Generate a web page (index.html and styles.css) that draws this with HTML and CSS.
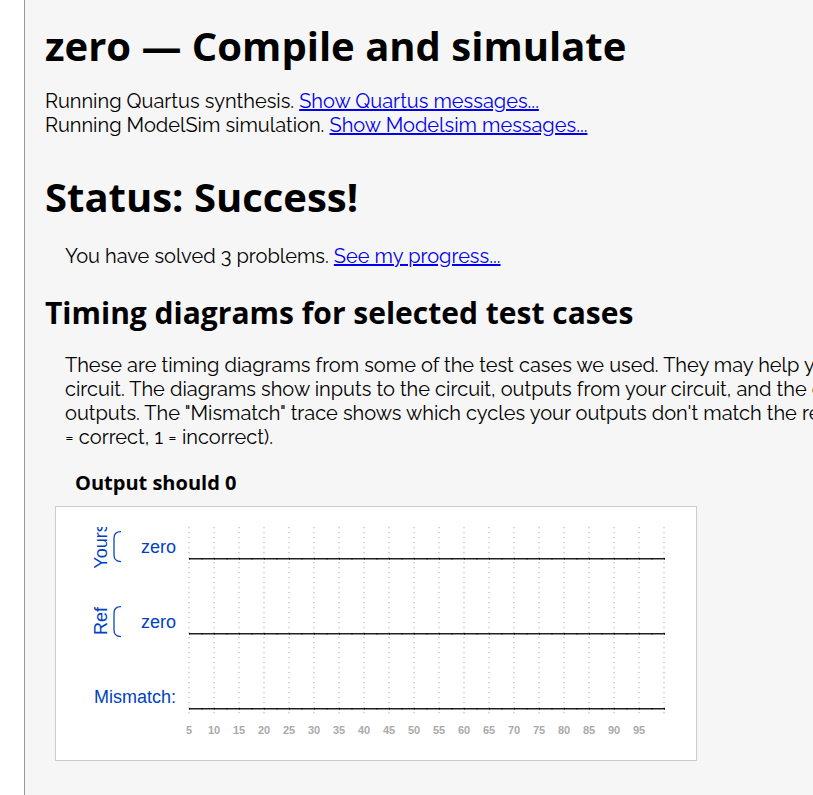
FILE: index.html
```html
<!DOCTYPE html>
<html lang="en">
<head>
<meta charset="utf-8">
<title>zero — Compile and simulate</title>
<link rel="stylesheet" href="styles.css">
</head>
<body>
<main class="content">
  <h1>zero — Compile and simulate</h1>
  <p class="log">Running Quartus synthesis. <a href="#quartus">Show Quartus messages...</a><br>
  Running ModelSim simulation. <a href="#modelsim">Show Modelsim messages...</a></p>

  <h1 class="status">Status: Success!</h1>
  <p class="note">You have solved 3 problems. <a href="#progress">See my progress...</a></p>

  <h2>Timing diagrams for selected test cases</h2>
  <p class="note">These are timing diagrams from some of the test cases we used. They may help you debug your<br>
  circuit. The diagrams show inputs to the circuit, outputs from your circuit, and the expected<br>
  outputs. The "Mismatch" trace shows which cycles your outputs don't match the reference outputs (0<br>
  = correct, 1 = incorrect).</p>

  <h3>Output should 0</h3>
  <figure class="diagram">
    <svg id="wave" width="600" height="213" viewBox="0 0 600 213" role="img" aria-label="Timing diagram">
      <g class="label">
        <text x="100" y="26" text-anchor="end">zero</text>
        <text x="100" y="101" text-anchor="end">zero</text>
        <text x="100" y="176" text-anchor="end">Mismatch:</text>
        <text transform="translate(31 19) rotate(-90)" text-anchor="middle">Yours</text>
        <text transform="translate(31 94) rotate(-90)" text-anchor="middle">Ref</text>
      </g>
      <path class="brace" d="M45 4.500 Q38 4.500 38 11 V28 Q38 34.500 45 34.500 M45 79.500 Q38 79.500 38 86 V103 Q38 109.500 45 109.500"/>
      <g id="grid"></g>
      <path class="trace" d="M113 31.800H589M113 106.800H589M113 181.800H589"/>
      <path class="tick" d="M113 31.800H589M113 106.800H589M113 181.800H589"/>
    </svg>
  </figure>
</main>
<script src="wave.js"></script>
</body>
</html>
```
FILE: styles.css
```css
body {
  margin: 0;
  background: #fff;
  color: #000;
  font: 20px/24px Raleway, Lato, sans-serif;
  overflow: hidden;
}

.content {
  box-sizing: border-box;
  min-height: 100vh;
  margin-left: 24px;
  padding: 19px 20px;
  border-left: 1px solid #999;
  background: #f6f6f6;
  white-space: nowrap;
  overflow: hidden;
}

h1, h2, h3 {
  margin: 0;
  font-family: "Open Sans", sans-serif;
  font-weight: 700;
}

h1 {
  font-size: 40px;
  line-height: 54px;
}

h2 {
  margin-top: 24px;
  font-size: 30px;
  line-height: 42px;
}

h3 {
  margin: 20px 0 0 30px;
  font-size: 20px;
  line-height: 28px;
}

p {
  margin: 0;
}

.log {
  margin-top: 16px;
}

.status {
  margin-top: 33px;
}

.note {
  margin: 19px 0 0 20px;
}

.status + .note {
  margin-top: 20px;
}

a {
  color: #00e;
}

.diagram {
  box-sizing: border-box;
  width: fit-content;
  margin: 9px 0 0 10px;
  padding: 20px;
  border: 1px solid #ccc;
  background: #fff;
}

.diagram svg {
  display: block;
}

.label text {
  fill: #0041c4;
  font: 18px "Liberation Sans", sans-serif;
}

.brace {
  fill: none;
  stroke: #0041c4;
  stroke-width: 1.25;
}

.grid-line {
  stroke: #888;
  stroke-width: 0.7;
  stroke-dasharray: 1.25 3.75;
}

.time {
  fill: #aaa;
  font: bold 11px "Liberation Sans", sans-serif;
  text-anchor: middle;
}

.trace {
  fill: none;
  stroke: #222;
  stroke-width: 1.5;
}

.tick {
  fill: none;
  stroke: #000;
  stroke-width: 1.5;
  stroke-dasharray: 1 11.5;
}
```
FILE: wave.js
```js
const ns = "http://www.w3.org/2000/svg";
const grid = document.getElementById("grid");

function add(name, attrs, text) {
  const node = document.createElementNS(ns, name);
  for (const key in attrs) node.setAttribute(key, attrs[key]);
  if (text) node.textContent = text;
  grid.appendChild(node);
}

for (let i = 0; i < 20; i++) {
  const x = 113 + 25 * i;
  add("line", { class: "grid-line", x1: x, x2: x, y1: 0, y2: 187 });
  if (i < 19) add("text", { class: "time", x: x, y: 207 }, String(5 * (i + 1)));
}
```
